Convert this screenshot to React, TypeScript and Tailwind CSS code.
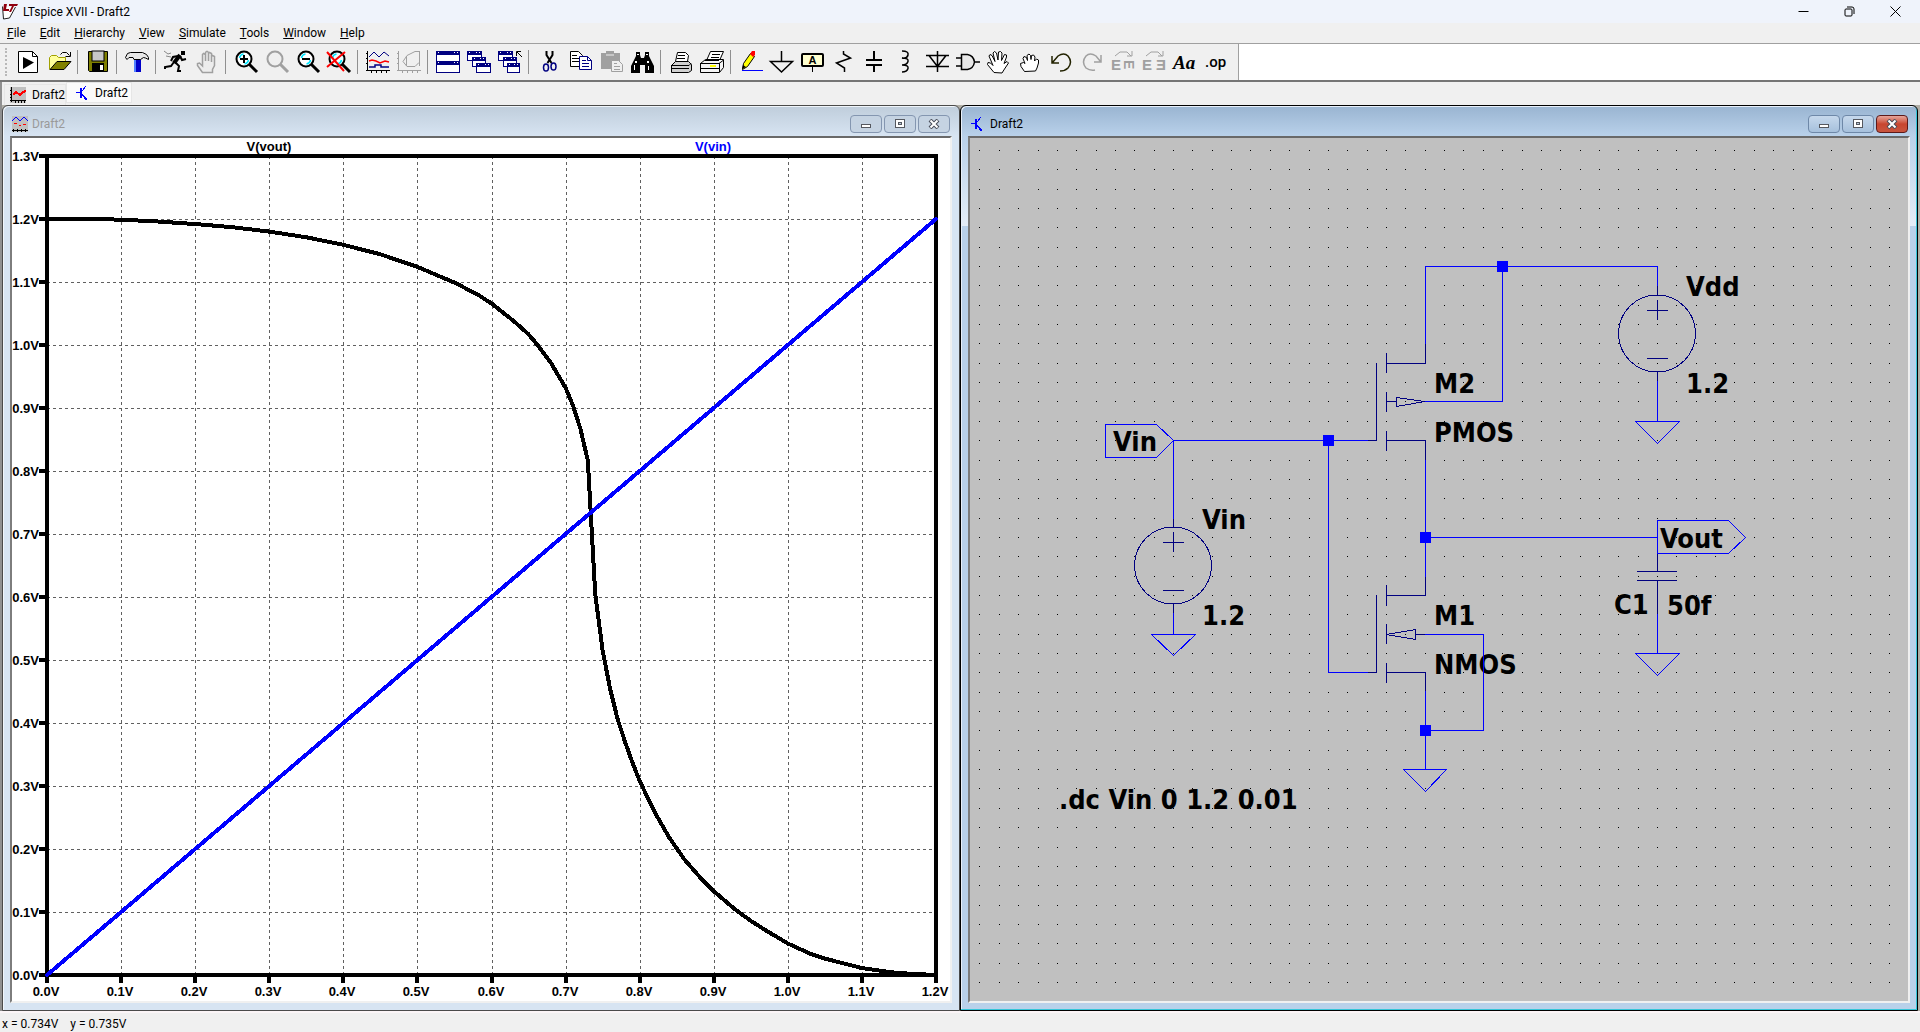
import React from "react";

const UI = "font-[Roboto,'Noto_Sans',sans-serif]";

type IconDef = { name: string; art: React.ReactNode; disabled?: boolean };

const GRAY = "#a0a0a0";
const NAVY = "#000080";

const lens = (color: string, glass: string) => (
  <>
    <circle cx="13" cy="9" r="7.5" fill={glass} stroke={color} strokeWidth="2" />
    <path d="M18.5 14.5L26 22" stroke={color} strokeWidth="3" />
    {color === "#000" && <path d="M8.5 8a5 5 0 0 1 4-4M17.5 10a5 5 0 0 1-4 4" stroke="#00e5ff" strokeWidth="1.5" fill="none" />}
  </>
);

const miniWindow = (x: number, y: number, w: number, h: number) => (
  <>
    <rect x={x + 0.5} y={y + 0.5} width={w - 1} height={h - 1} fill="#fff" stroke={NAVY} />
    <rect x={x} y={y} width={w} height="4" fill={NAVY} />
    <path d={`M${x + 2} ${y + 1}h1v1h-1zM${x + w - 6} ${y + 1}h1v1h-1zM${x + w - 3} ${y + 1}h1v1h-1z`} fill="#fff" />
  </>
);

const openHand =
  "M10 22.5L3.5 14.500l.5-2 2.500.5 2.500 2.500-4-9.500 1-1.500 2 1 3 6-2-8.500 1.500-1.500 2 1.500 1.500 7 .5-8 2-.5 1.500 1.500-.5 7.500 3-6 2 .5v2l-2.500 6.500 3-2 1.500 1.500-4 6-2.500 4z";

const groups: IconDef[][] = [
  [
    {
      name: "New schematic",
      art: (
        <>
          <path d="M5.500 1.500h14l5 5v16h-19z" fill="#fff" stroke="#000" />
          <path d="M19.500 1.500v5h5" fill="none" stroke="#000" />
          <path d="M10 7l11 5.500L10 19z" fill="#000" />
        </>
      ),
    },
    {
      name: "Open",
      art: (
        <>
          <path d="M5.500 19.500V7.500l2-2h5l2 2h7v5" fill="#ffff9c" stroke="#a0a000" />
          <path d="M6 19.500L13 11.500h14L20 19.500z" fill="#808000" stroke="#000" />
          <path d="M16.500 4.500l2-2h4l3 3M26.500 2v4.500h-5" fill="none" stroke="#000" />
        </>
      ),
    },
  ],
  [
    {
      name: "Save",
      art: (
        <>
          <path d="M5.500 1.500h19v20h-18l-1-1z" fill="#808000" stroke="#000" />
          <rect x="9" y="1" width="12" height="10" fill="#c8c8c8" stroke="#000" />
          <rect x="9" y="13" width="12" height="8" fill="#000" />
          <rect x="17" y="15" width="3" height="5" fill="#fff" />
        </>
      ),
    },
  ],
  [
    {
      name: "Control panel",
      art: (
        <>
          <rect x="12" y="9" width="7" height="13" fill="#0000c8" />
          <rect x="12" y="9" width="2" height="13" fill="#5080ff" />
          <path d="M3.500 7.500l2-4 3-1h12l4 2 2 3v2l-3-1.500-2-.5-3 2H12l-1-2H7l-2 2z" fill="#e8e8e8" stroke="#000" />
        </>
      ),
    },
  ],
  [
    {
      name: "Run",
      art: (
        <>
          <rect x="20" y="1" width="4" height="4" fill="#000" />
          <path d="M19 5l-6 8" stroke="#000" strokeWidth="4" />
          <path d="M19 6l2 4 4-1M17 6l-5 1-2 4M14 12l4 4-1 5h3M13 12l-3 4-6 1v2" fill="none" stroke="#000" strokeWidth="2" />
          <path d="M3 1l4 3 3-1M5 6l5 1" fill="none" stroke="#888" />
        </>
      ),
    },
    {
      name: "Halt",
      disabled: true,
      art: (
        <path
          d="M10.500 22.500L5.500 15.500v-2l2-.5 3 3V4.500l1-1 2 1V11 2.500l1-1h1l1 1V11 3.500l1-1 2 1V12 6.500l1-1 2 1v9l-2 4v3z"
          fill="#ededed"
          stroke={GRAY}
          strokeWidth="1.500"
        />
      ),
    },
  ],
  [
    { name: "Zoom to rectangle", art: <>{lens("#000", "#fff")}<path d="M9 9h8M13 5v8" stroke="#000" strokeWidth="2" /></> },
    { name: "Pan", disabled: true, art: lens(GRAY, "#efefef") },
    { name: "Zoom back", art: <>{lens("#000", "#fff")}<path d="M9 9h8" stroke="#000" strokeWidth="2" /></> },
    {
      name: "Zoom to fit",
      art: (
        <>
          {lens("#000", "#e8ffff")}
          <path d="M3 2l17 19M21 2L3 17" stroke="#f00" strokeWidth="2" />
        </>
      ),
    },
  ],
  [
    {
      name: "Autorange",
      art: (
        <>
          <path d="M4.500 1v20M3 20.500h24M3 3.500h2M3 8.500h2M3 13.500h2M8.500 20v3M13.500 20v3M18.500 20v3M23.500 20v3" stroke="#000" fill="none" />
          <path d="M6 7l5-5 5 5 5-5 5 4" stroke={NAVY} fill="none" />
          <path d="M6 11l3-1 4 1 4 2 5-2 4 1" stroke="#f00" fill="none" strokeWidth="1.500" />
          <path d="M6 17h6v-2h6v2h8" stroke={NAVY} fill="none" strokeWidth="1.500" />
        </>
      ),
    },
    {
      name: "Mark reset",
      disabled: true,
      art: (
        <path
          d="M4.500 1v20M3 20.500h24M3 3.500h2M3 8.500h2M3 13.500h2M8.500 20v3M13.500 20v3M18.500 20v3M23.500 20v3M25 1.500h-4l-8 4-4 6 4 5h8l4-4M12.500 6v10M25.500 1v15"
          stroke={GRAY}
          fill="none"
        />
      ),
    },
  ],
  [
    { name: "Tile windows", art: <>{miniWindow(3, 1, 24, 12)}{miniWindow(3, 11, 24, 12)}</> },
    { name: "Cascade windows", art: <>{miniWindow(3, 1, 15, 10)}{miniWindow(8, 7, 14, 10)}{miniWindow(12, 13, 15, 10)}</> },
    {
      name: "Close all windows",
      art: (
        <>
          {miniWindow(3, 1, 15, 10)}{miniWindow(8, 7, 14, 10)}{miniWindow(12, 13, 13, 10)}
          <path d="M21.500 6V1.500H26M22 2l5 5" stroke="#000" fill="none" />
        </>
      ),
    },
  ],
  [
    {
      name: "Cut",
      art: (
        <>
          <path d="M12.500 1v4l5 8M18.500 1v4l-5 8" stroke="#000" strokeWidth="2" fill="none" />
          <ellipse cx="12" cy="17.500" rx="2.500" ry="3.500" fill="none" stroke={NAVY} strokeWidth="1.500" />
          <ellipse cx="19.500" cy="16.500" rx="2.500" ry="3.500" fill="none" stroke={NAVY} strokeWidth="1.500" />
        </>
      ),
    },
    {
      name: "Copy",
      art: (
        <>
          <path d="M5.500 1.500h8l4 4v11h-12z" fill="#fff" stroke="#000" />
          <path d="M7 5.500h5M7 8.500h7M7 11.500h7" stroke="#000" />
          <path d="M14.500 6.500h8l4 4v9h-12z" fill="#fff" stroke={NAVY} />
          <path d="M17 10.500h4M17 13.500h7M17 16.500h7M22.500 6.500v4h4" stroke={NAVY} fill="none" />
        </>
      ),
    },
    {
      name: "Paste",
      disabled: true,
      art: (
        <>
          <path d="M5 3h5V1h8v2h6v16H5z" fill={GRAY} />
          <path d="M10 5h8" stroke="#eee" />
          <path d="M15.500 10.500h7l4 4v7h-11z" fill="#efefef" stroke={GRAY} />
          <path d="M18 13.500h3M18 16.500h6M18 19.500h6" stroke={GRAY} />
        </>
      ),
    },
    {
      name: "Find",
      art: (
        <>
          <path d="M9 2h4v3l1 3h3l1-3V2h4v4l5 10v7h-9v-8h-5v8H4v-7L9 6z" fill="#000" />
          <path d="M10 4h2v1h-2zM19 4h2v1h-2zM8 11h2v2H8zM7 15h1v5H7zM20 11h2v2h-2zM21 16h1v4h-1z" fill="#fff" />
        </>
      ),
    },
  ],
  [
    {
      name: "Print",
      art: (
        <>
          <path d="M9.500 11.500l2-9h8l3 3-1 6z" fill="#fff" stroke="#000" />
          <path d="M5.500 15.500l4-4h13l3 3v6l-3 2h-17z" fill="#d0d0d0" stroke="#000" />
          <path d="M5 15.500h18l2-2M12 5.500h7M11 8.500h8M6 18.500h17" stroke="#000" fill="none" />
        </>
      ),
    },
    {
      name: "Print setup",
      art: (
        <>
          <path d="M9.500 10.500l4-9h13l-4 9z" fill="#fff" stroke="#000" />
          <path d="M15 4.500h8M14 7.500h8" stroke="#000" />
          <path d="M3.500 13.500l5-4h18v8l-4 5h-19z" fill="#f4f4f4" stroke="#000" />
          <path d="M3 13.500h19l4-3M22.500 13v9M3 18.500h19M8 10.500h14" stroke="#000" fill="none" />
          <rect x="13" y="15" width="6" height="2" fill="#ff0" />
        </>
      ),
    },
  ],
  [
    {
      name: "Draw wire",
      art: (
        <>
          <path d="M6 20.500h21" stroke="#00f" />
          <path d="M6.500 19.500l1-6 7-10 4 3-7 10z" fill="#ff0" stroke="#000" />
          <path d="M14 4l2-3h3v4l-2 2z" fill="#f00" />
          <path d="M6 19l1-4 3 2z" fill="#000" />
        </>
      ),
    },
    { name: "Ground", art: <path d="M14.500 1v10M3.500 11.500h22L14.500 22z" stroke="#000" fill="none" strokeWidth="1.500" /> },
    {
      name: "Label net",
      art: (
        <>
          <rect x="4" y="4" width="21" height="12" rx="1" fill="#ffffd0" stroke="#000" strokeWidth="2" />
          <path d="M14.500 16v6" stroke="#000" />
          <text x="14.500" y="14" textAnchor="middle" fontSize="11" fontWeight="700" fontFamily="Liberation Sans, sans-serif">A</text>
        </>
      ),
    },
    { name: "Resistor", art: <path d="M14.500 1v3l7 4-14 5 8 5v4" stroke="#000" fill="none" strokeWidth="1.500" /> },
    { name: "Capacitor", art: <path d="M14 1v8M14 16v6M6 10h16M6 15h16" stroke="#000" fill="none" strokeWidth="2" /> },
    { name: "Inductor", art: <path d="M11 1q7 0 6 4t-6 3q7 0 6 3.500t-6 3.500q7 0 6 3.500t-6 3.500" stroke="#000" fill="none" strokeWidth="1.500" /> },
    { name: "Diode", art: <path d="M15.500 1v21M4 5.500h23M4 16.500h23M7 5.500l8.500 11 8.500-11" stroke="#000" fill="none" strokeWidth="1.500" /> },
    {
      name: "Component",
      art: <path d="M8.500 4.500h6q6 1 7 7.500-1 6.500-7 7.500h-6zM3 8h5M3 16h5M22 12h5" stroke="#000" fill="#e8e8e8" strokeWidth="1.500" />,
    },
    { name: "Move", art: <path d={openHand} fill="#fff" stroke="#000" /> },
    {
      name: "Drag",
      art: (
        <path
          d="M9.500 21.500L6 16.500l-.5-3 3-1 1.500 1-2-5 1-2 2.500 1 1 3-.5-5 2-1.500 1.500 1.500.5 4 .5-4 2-.5 1.500 2-.5 4 2-2 2 1v3l-1.500 5-1.500 3z"
          fill="#fff"
          stroke="#000"
        />
      ),
    },
    { name: "Undo", art: <path d="M6 6v7h7M6.500 12.500L12 6q6-4 10 0 5 6 0 12-3 3-8 3" stroke="#222200" fill="none" strokeWidth="1.500" /> },
    { name: "Redo", disabled: true, art: <path d="M24 5v7h-7M23.500 11.500L19 6q-6-4-10 0-5 6 0 12 4 3 9 2" stroke={GRAY} fill="none" strokeWidth="1.500" /> },
    {
      name: "Rotate",
      disabled: true,
      art: (
        <g fill={GRAY}>
          <path d="M7 6l5-4h7l4 4M24 1v5h-5" stroke={GRAY} fill="none" />
          <text x="3" y="20" fontSize="15" fontWeight="700" fontFamily="Liberation Sans, sans-serif">E</text>
          <text transform="translate(16 10) rotate(90)" fontSize="14" fontWeight="700" fontFamily="Liberation Sans, sans-serif">E</text>
        </g>
      ),
    },
    {
      name: "Mirror",
      disabled: true,
      art: (
        <g fill={GRAY}>
          <path d="M7 6l5-4h7l4 4M24 1v5h-5" stroke={GRAY} fill="none" />
          <text x="3" y="20" fontSize="15" fontWeight="700" fontFamily="Liberation Sans, sans-serif">E</text>
          <text x="17" y="20" fontSize="15" fontWeight="700" fontFamily="Liberation Sans, sans-serif">Ǝ</text>
        </g>
      ),
    },
    {
      name: "Text",
      art: <text x="3" y="19" fontSize="19" fontStyle="italic" fontWeight="700" fontFamily="Liberation Serif, serif">Aa</text>,
    },
    {
      name: "SPICE directive",
      art: <text x="4" y="17" fontSize="15" fontWeight="500" fontFamily="Roboto, sans-serif">.op</text>,
    },
  ],
];

const menus = ["File", "Edit", "Hierarchy", "View", "Simulate", "Tools", "Window", "Help"];

function TransistorIcon() {
  return (
    <svg viewBox="0 0 16 16" className="size-4 shrink-0" shapeRendering="crispEdges" aria-hidden="true">
      <path d="M1 7.500h5M7 6l4-5M7 9l3 4" stroke="#00f" fill="none" />
      <path d="M5 3h2v10H5zM12 15l-4-1 3-3z" fill="#00f" />
    </svg>
  );
}

function GraphTabIcon() {
  return (
    <svg viewBox="0 0 16 16" className="size-4 shrink-0" shapeRendering="crispEdges" aria-hidden="true">
      <rect width="16" height="16" fill="#c0c0c0" />
      <path d="M1.500 0v15M0 13.500h16M0 3.500h2M0 7.500h2M0 10.500h2M5.500 13v3M8.500 13v3M11.500 13v3M14.500 13v3" stroke="#000" />
      <path d="M3 8l3-3 4 3 3-3 3-1" stroke="#f00" strokeWidth="2" fill="none" />
    </svg>
  );
}

function PlotWindowIcon() {
  return (
    <svg viewBox="0 0 16 16" className="size-4 shrink-0" shapeRendering="crispEdges" aria-hidden="true">
      <rect width="16" height="16" fill="#c0c0c0" />
      <path d="M0 5l4-4 4 4 4-4 4 4" stroke="#00f" fill="none" />
      <path d="M2 7.500h3M7 9.500h2M11 8.500h3" stroke="#f00" />
      <path d="M0 14.500h16M1.500 13v3M5.500 13v3M9.500 13v3M13.500 13v3" stroke="#000" />
    </svg>
  );
}

function MdiButton({ kind, active }: { kind: "Minimize" | "Maximize" | "Close"; active: boolean }) {
  const tone = !active
    ? "border-[#8496b0] bg-[#c5d3e2]"
    : kind === "Close"
      ? "border-[#5c1a1a] bg-linear-to-b from-[#e5a59b] via-[#c8452f] via-50% to-[#c8553f]"
      : "border-[#6e88a8] bg-linear-to-b from-[#c6d8ec] to-[#a6c0dc]";
  return (
    <button aria-label={kind} className={`flex h-[18px] w-8 items-center justify-center rounded-sm border ${tone}`}>
      <svg viewBox="0 0 12 10" className="h-[10px] w-3" aria-hidden="true">
        {kind === "Minimize" && <rect x="1.500" y="5.500" width="9" height="3" fill="#fff" stroke="#55585f" />}
        {kind === "Maximize" && (
          <>
            <rect x="1.500" y=".5" width="9" height="8" fill="#fff" stroke="#55585f" />
            <rect x="4.500" y="3.500" width="3" height="2" fill="#b8c8da" stroke="#55585f" />
          </>
        )}
        {kind === "Close" && (
          <>
            <path d="M2 1l8 8M10 1L2 9" stroke="#484c58" strokeWidth="4" />
            <path d="M2.500 1.500l7 7M9.500 1.500l-7 7" stroke="#fff" strokeWidth="2" />
          </>
        )}
      </svg>
    </button>
  );
}

function MdiWindow({ title, icon, active, children }: { title: string; icon: React.ReactNode; active: boolean; children: React.ReactNode }) {
  return (
    <section
      className={
        active
          ? "flex min-w-0 flex-1 flex-col rounded-t-md border border-black bg-[linear-gradient(to_bottom,#99b4d1_0,#b9d1ea_30px,#e4edf7_120px,#b9d1ea_120px)] px-[7px] pb-[7px] shadow-[inset_-1px_-1px_0_#35c5d8,inset_1px_1px_0_#e8f0fa]"
          : "flex min-w-0 flex-1 flex-col rounded-t-md border border-[#4a4a4a] bg-[linear-gradient(to_bottom,#bfcddb_0,#d7e4f2_30px)] px-[7px] pb-[7px] shadow-[inset_1px_1px_0_#f0f5fa]"
      }
    >
      <header className="flex h-[30px] shrink-0 items-center justify-between px-[2px] pt-[6px]">
        <div className="flex items-center gap-1">
          {icon}
          <h2 className={active ? "text-xs text-black" : "text-xs text-[#9a9a9a]"}>{title}</h2>
        </div>
        <div className="flex gap-[2px]">
          <MdiButton kind="Minimize" active={active} />
          <MdiButton kind="Maximize" active={active} />
          <MdiButton kind="Close" active={active} />
        </div>
      </header>
      <div className="min-h-0 flex-1 border-2 border-t-[#696969] border-r-[#f0f0f0] border-b-[#f0f0f0] border-l-[#7d7d7d]">{children}</div>
    </section>
  );
}

const LEFT = 47;
const TOP = 156;
const RIGHT = 936;
const BOTTOM = 975;
const px = (v: number) => LEFT + (v / 1.2) * (RIGHT - LEFT);
const py = (v: number) => BOTTOM - (v / 1.3) * (BOTTOM - TOP);

const vout: [number, number][] = [
  [0, 1.2], [0.05, 1.2], [0.1, 1.199], [0.15, 1.196], [0.2, 1.192], [0.25, 1.187], [0.3, 1.18], [0.35, 1.171],
  [0.4, 1.159], [0.45, 1.144], [0.5, 1.124], [0.55, 1.099], [0.58, 1.081], [0.6, 1.066], [0.63, 1.038], [0.65, 1.017], [0.66, 1.003],
  [0.68, 0.972], [0.7, 0.932], [0.71, 0.904], [0.72, 0.867], [0.73, 0.817], [0.74, 0.605], [0.75, 0.515], [0.76, 0.455],
  [0.77, 0.407], [0.78, 0.371], [0.79, 0.338], [0.8, 0.308], [0.82, 0.259], [0.84, 0.218], [0.86, 0.184], [0.88, 0.157],
  [0.9, 0.133], [0.93, 0.103], [0.95, 0.086], [0.97, 0.071], [1.0, 0.05], [1.03, 0.034], [1.05, 0.026], [1.1, 0.011],
  [1.13, 0.006], [1.15, 0.003], [1.2, 0],
];

const steps = (n: number) => Array.from({ length: n }, (_, i) => i / 10);

function Waveform() {
  return (
    <svg viewBox="12 138 938 863" className="block size-full bg-white" shapeRendering="crispEdges" role="img" aria-label="Waveform plot">
      <g stroke="#606060" strokeDasharray="3 3">
        {steps(12).slice(1).map((v) => (
          <path key={v} d={`M${Math.round(px(v)) + 0.5} ${TOP}V${BOTTOM}`} />
        ))}
        {steps(13).slice(1).map((v) => (
          <path key={v} d={`M${LEFT} ${Math.round(py(v)) + 0.5}H${RIGHT}`} />
        ))}
      </g>
      <g stroke="#000" strokeWidth="4" fill="none">
        <rect x={LEFT} y={TOP} width={RIGHT - LEFT} height={BOTTOM - TOP} />
        {steps(13).map((v) => (
          <path key={v} d={`M${Math.round(px(v))} ${BOTTOM}v8`} />
        ))}
        {steps(14).map((v) => (
          <path key={v} d={`M${LEFT} ${Math.round(py(v))}h-8`} />
        ))}
        <polyline points={vout.map(([x, y]) => `${px(x)},${py(y)}`).join(" ")} strokeLinejoin="round" />
      </g>
      <path d={`M${px(0)} ${py(0)}L${px(1.2)} ${py(1.2)}`} stroke="#00f" strokeWidth="4" strokeLinecap="round" />
      <g fontFamily="Liberation Sans, Arial, sans-serif" fontSize="13" fontWeight="700">
        <text x="269" y="151" textAnchor="middle">V(vout)</text>
        <text x="713" y="151" textAnchor="middle" fill="#00f">V(vin)</text>
        {steps(13).map((v) => (
          <text key={v} x={Math.round(px(v)) - 1} y="996" textAnchor="middle">{v.toFixed(1)}V</text>
        ))}
        {steps(14).map((v) => (
          <text key={v} x="39" y={Math.round(py(v)) + 5} textAnchor="end">{v.toFixed(1)}V</text>
        ))}
      </g>
    </svg>
  );
}

const gridDots = Array.from({ length: 48 }, (_, i) => Math.round(979.45 + 19.36 * i))
  .flatMap((x) => Array.from({ length: 44 }, (_, j) => `M${x} ${Math.round(149.9 + 19.35 * j)}h1v1h-1z`))
  .join("");

const wires = [
  "M1105.5 424.5H1156.5L1173.5 440.5L1156.5 457.5H1105.5Z",
  "M1173.5 440.5H1368M1173.5 440.5V519M1173.5 613V634.5",
  "M1151.5 634.5H1195.5L1173.5 655.5Z",
  "M1328.5 440.5V672.5H1368",
  "M1425.5 344V266.5H1657.5V286",
  "M1502.5 266.5V401.5H1425",
  "M1425.5 460V577M1425.5 537.5H1657.5",
  "M1657.5 520.5H1728.5L1745.5 537.5L1728.5 553.5H1657.5ZM1657.5 614V653.5",
  "M1635.5 653.5H1679.5L1657.5 675.5Z",
  "M1657.5 381V421.5M1635.5 421.5H1679.5L1657.5 443.5Z",
  "M1425 634.5H1483.5V730.5H1425.5M1425.5 691V769.5",
  "M1403.5 769.5H1446.5L1425.5 791.5Z",
];

const symbols = [
  "M1173.5 519V527M1173.5 604V613M1163 542.5h21M1173.5 532v20M1163 590.5h21",
  "M1657.5 286V295M1657.5 371V381M1647 310.5h21M1657.5 300v20M1647 358.5h21",
  "M1368 440.5H1376.5V363M1386.5 353v20M1386.5 392v20M1386.5 431v20",
  "M1386 363.5H1425.5V344M1386 401.5H1396M1396.5 397.5V406.5L1425 401.5ZM1386 440.5H1425.5V460",
  "M1368 672.5H1376.5V595M1386.5 585v21M1386.5 624v20M1386.5 663v20",
  "M1386 595.5H1425.5V577M1386.5 634.5L1415.5 629.5V639.5ZM1415 634.5H1425M1386 672.5H1425.5V691",
  "M1657.5 553V571.5M1637 571.5h40M1637 580.5h40M1657.5 580V614",
];

const junctions: [number, number][] = [[1323, 435], [1497, 261], [1420, 532], [1420, 725]];

const labels: [number, number, string][] = [
  [1113, 451, "Vin"], [1202, 529, "Vin"], [1202, 625, "1.2"], [1434, 393, "M2"], [1434, 442, "PMOS"],
  [1686, 296, "Vdd"], [1686, 393, "1.2"], [1660, 548, "Vout"], [1614, 614, "C1"], [1667, 615, "50f"],
  [1434, 625, "M1"], [1434, 674, "NMOS"], [1059, 809, ".dc Vin 0 1.2 0.01"],
];

function Schematic() {
  return (
    <svg viewBox="970 138 938 863" className="block size-full bg-[#c0c0c0]" shapeRendering="crispEdges" role="img" aria-label="Schematic">
      <path d={gridDots} fill="#000" />
      <g fill="none" stroke={NAVY}>
        {symbols.map((d) => <path key={d} d={d} />)}
        <circle cx="1173" cy="565.500" r="38.500" />
        <circle cx="1657" cy="333.500" r="38.500" />
      </g>
      <g fontSize="27" fontWeight="700" fontFamily="'DejaVu Sans Condensed', 'DejaVu Sans', sans-serif">
        {labels.map(([x, y, t]) => <text key={`${x}-${y}`} x={x} y={y}>{t}</text>)}
      </g>
      <g fill="none" stroke="#00f">
        {wires.map((d) => <path key={d} d={d} />)}
      </g>
      {junctions.map(([x, y]) => <rect key={`${x}-${y}`} x={x} y={y} width="11" height="11" fill="#00f" />)}
    </svg>
  );
}

export default function App() {
  return (
    <div className={`flex h-screen flex-col overflow-hidden bg-[#f0f0f0] text-black ${UI}`}>
      <header className="flex h-[23px] shrink-0 items-center justify-between bg-[#eff3fb]">
        <div className="flex items-center gap-1 pl-[2px]">
          <svg viewBox="0 0 17 17" className="size-[17px]" aria-hidden="true">
            <path d="M.5 3.500L1.500 16l6-1 6-11" fill="#fff" stroke="#222" />
            <path d="M2 1h3l-1 5h3v2H1zM7 1h9l-1 2h-3l-3 6H7l3-6H7z" fill="#900010" />
          </svg>
          <h1 className="text-xs">LTspice XVII - Draft2</h1>
        </div>
        <div className="flex pr-[2px]">
          <button aria-label="Minimize" className="flex h-5 w-[46px] items-center justify-center">
            <svg viewBox="0 0 11 11" className="size-[11px]"><path d="M.5 5.500h10" stroke="#000" /></svg>
          </button>
          <button aria-label="Restore" className="flex h-5 w-[46px] items-center justify-center">
            <svg viewBox="0 0 11 11" className="size-[11px]">
              <rect x="1" y="3" width="7" height="7" rx="1" fill="none" stroke="#000" />
              <path d="M3 1h5q2 0 2 2v5" fill="none" stroke="#000" />
            </svg>
          </button>
          <button aria-label="Close" className="flex h-5 w-[46px] items-center justify-center">
            <svg viewBox="0 0 11 11" className="size-[11px]"><path d="M.5.5l10 10M10.500.5l-10 10" stroke="#000" /></svg>
          </button>
        </div>
      </header>

      <nav className="flex h-5 shrink-0 items-center gap-[14px] pl-[7px]">
        {menus.map((m) => (
          <button key={m} className="text-xs">
            <span className="underline">{m[0]}</span>
            {m.slice(1)}
          </button>
        ))}
      </nav>

      <div className="flex h-[39px] shrink-0 border-t border-b-2 border-t-[#a0a0a0] border-b-[#757575] bg-white">
        <div role="toolbar" className="flex items-center border-r border-[#a0a0a0] bg-[#f0f0f0] pr-[6px] pl-[5px]">
          <span className="mr-[6px] h-7 border-l-2 border-dotted border-[#b8b8b8]" />
          {groups.map((g, gi) => (
            <React.Fragment key={gi}>
              {gi > 0 && <span className="mr-[5px] ml-[2px] h-6 w-px bg-[#909090]" />}
              {g.map((ic) => (
                <button key={ic.name} aria-label={ic.name} disabled={ic.disabled} className="h-6 w-[31px]">
                  <svg viewBox="0 0 31 24" className="h-6 w-[31px]" aria-hidden="true">{ic.art}</svg>
                </button>
              ))}
            </React.Fragment>
          ))}
        </div>
      </div>

      <div role="tablist" className="flex h-[23px] shrink-0 border-l-2 border-[#909090] pl-[2px]">
        <button role="tab" aria-selected="false" className="mt-[2px] flex w-[62px] items-center gap-[6px] border border-b-0 border-[#e6e6e6] pl-[5px] text-xs">
          <GraphTabIcon />
          Draft2
        </button>
        <button role="tab" aria-selected="true" className="mb-[2px] flex w-[66px] items-center gap-1 border border-[#e6e6e6] bg-[#fafafa] pl-2 text-xs">
          <TransistorIcon />
          Draft2
        </button>
      </div>

      <main className="flex min-h-0 flex-1 border-l-2 border-[#909090] bg-[#b0aea6] pr-[2px]">
        <MdiWindow title="Draft2" icon={<PlotWindowIcon />} active={false}>
          <Waveform />
        </MdiWindow>
        <MdiWindow title="Draft2" icon={<TransistorIcon />} active>
          <Schematic />
        </MdiWindow>
      </main>

      <footer className="flex h-[21px] shrink-0 items-center gap-3 border-t-2 border-[#fbf5f7] pt-[2px] pl-[2px] text-xs">
        <span>x = 0.734V</span>
        <span>y = 0.735V</span>
      </footer>
    </div>
  );
}
